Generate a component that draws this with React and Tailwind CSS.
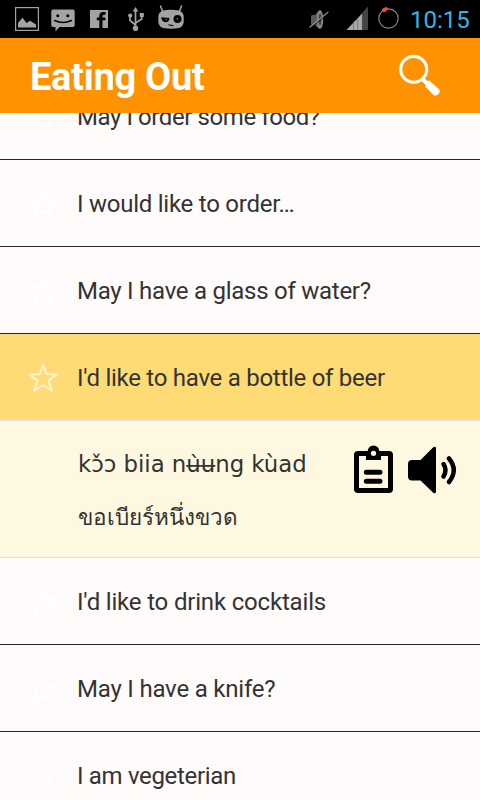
const phrasesAbove = [
  { text: "May I order some food?", tracking: "tracking-[-0.42px]" },
  { text: "I would like to order…", tracking: "tracking-[-0.25px]" },
  { text: "May I have a glass of water?", tracking: "tracking-[-0.26px]" },
];

const phrasesBelow = [
  { text: "I'd like to drink cocktails", tracking: "tracking-[-0.18px]" },
  { text: "May I have a knife?", tracking: "tracking-[-0.2px]" },
  { text: "I am vegeterian", tracking: "tracking-[-0.33px]" },
];

const StatusBar = () => {
  return (
    <div className="flex h-[38px] shrink-0 items-start bg-black text-[#a3a3a3]">
      <svg className="mt-[7px] ml-[15px] size-6" viewBox="0 0 24 24">
        <rect x="0.6" y="0.6" width="22.8" height="22.8" fill="none" stroke="currentColor" strokeWidth="1.2" />
        <path d="M3 20.5v-4.500L7.500 10.700L11.500 16L15 13.800L21 17.500V20.500Z" fill="currentColor" />
      </svg>
      <svg className="mt-[9px] ml-3 h-[23px] w-6" viewBox="0 0 24 23">
        <path d="M2 0.500H22Q23.700 0.500 23.700 2.200V16.300Q23.700 18 22 18H8.500L4.500 22.500V18H2Q0.300 18 0.300 16.300V2.200Q0.300 0.500 2 0.500Z" fill="currentColor" />
        <circle cx="6.800" cy="6.800" r="1.500" fill="#000" />
        <circle cx="16.800" cy="6.800" r="1.500" fill="#000" />
        <path d="M3.700 11.500Q12 15.500 20.300 11.500" fill="none" stroke="#000" strokeWidth="1.600" strokeLinecap="round" />
      </svg>
      <svg className="mt-[10px] ml-[15px] size-[18px]" viewBox="0 0 18 18">
        <rect width="18" height="18" fill="currentColor" />
        <path d="M9.300 18V10.300H6.800V7.500H9.300V6Q9.300 2 13 2H15.500V4.800H14Q12.500 4.800 12.500 6.300V7.500H15.500V10.300H12.500V18Z" fill="#000" />
      </svg>
      <svg className="mt-[7px] ml-5 h-6 w-4" viewBox="0 0 16 24">
        <g fill="none" stroke="currentColor" strokeWidth="1.700">
          <path d="M7.500 3V20M7.500 18L2 13.500V9M7.500 16L13.700 12V8" />
        </g>
        <path d="M7.500 0L10.300 4.500H4.700Z" fill="currentColor" />
        <circle cx="2.200" cy="8.500" r="2.100" fill="currentColor" />
        <rect x="11.800" y="6" width="4" height="4" fill="currentColor" />
        <circle cx="7.500" cy="21.200" r="2.700" fill="currentColor" />
      </svg>
      <svg className="mt-[5px] ml-[14px] h-6 w-[26px]" viewBox="0 0 26 24">
        <path d="M2.500 1L5 7.500M23.500 1L21 7.500" fill="none" stroke="currentColor" strokeWidth="1.500" strokeLinecap="round" />
        <path d="M5 5.500Q13 4 21 5.500Q25.700 7 25.700 12V17Q25 22 21 23Q13 24.500 5 23Q1 22 0.300 17V12Q0.300 7 5 5.500Z" fill="currentColor" />
        <path d="M3.200 12.300L11.500 13Q11 17.300 7.500 17.300Q3.700 17 3.200 12.300Z" fill="#000" />
        <circle cx="19.500" cy="14" r="4" fill="#000" />
        <circle cx="8.200" cy="14.500" r="0.700" fill="currentColor" />
        <circle cx="19.300" cy="14" r="0.700" fill="currentColor" />
        <path d="M10.500 19.800L15.500 20.800" stroke="#000" strokeWidth="1.100" />
      </svg>

      <svg className="mt-[9px] ml-[125px] h-[22px] w-5" viewBox="0 0 20 22">
        <path d="M2 7.500Q2 6 3.500 6H6L10 1.500V20L6 16H3.500Q2 16 2 14.500Z" fill="#5a5a5a" />
        <ellipse cx="11" cy="10.500" rx="3.200" ry="9.500" fill="#858585" />
        <ellipse cx="11" cy="10.500" rx="1.300" ry="6" fill="#3c3c3c" />
        <path d="M0.500 19.700L19 4.500" stroke="#000" strokeWidth="1" />
        <path d="M0.500 18.500L19.300 3" stroke="#8a8a8a" strokeWidth="1.400" />
      </svg>
      <svg className="mt-[6px] ml-[17px] h-6 w-[22px]" viewBox="0 0 22 24">
        <path d="M0.500 24L16.500 7V24Z" fill="#a8a8a8" />
        <path d="M16.500 6.500L22 0.500V24H16.500Z" fill="#444" />
        <path d="M7.500 16V24M11.700 12V24" stroke="#777" strokeWidth="0.900" />
      </svg>
      <svg className="mt-[7px] ml-[10px] size-[22px]" viewBox="0 0 22 22">
        <circle cx="10.500" cy="11.500" r="9.700" fill="none" stroke="#858585" strokeWidth="1.200" />
        <path d="M6 3Q7 2.200 8 2" fill="none" stroke="#ff4444" strokeWidth="3.800" strokeLinecap="round" />
      </svg>
      <span className="mt-[5px] ml-[10px] text-[24px] leading-[30px] whitespace-nowrap text-[#33b5e5]">10:15</span>
    </div>
  );
};

const Header = () => {
  return (
    <header className="flex h-[75px] shrink-0 items-start justify-between bg-[#ff9200] pr-[39px] pl-[30px]">
      <h1 className="mt-[15px] text-[38px] leading-[48px] font-bold tracking-[-0.3px] whitespace-nowrap text-white">
        Eating Out
      </h1>
      <button className="mt-4">
        <svg className="h-[43px] w-[42px]" viewBox="0 0 42 43" fill="none">
          <circle cx="14.700" cy="15.300" r="13" stroke="#fff" strokeWidth="3.200" />
          <path d="M23.500 25L28 29.500" stroke="#fff" strokeWidth="4" />
          <path d="M26.500 29L30 26.300L40 35.300Q41.700 37.500 39.500 40Q37 42.500 34.500 41L26.500 33Z" fill="#fff" />
        </svg>
      </button>
    </header>
  );
};

const Star = ({ className }) => {
  return (
    <svg className={className} viewBox="0 0 30 30" fill="none">
      <path
        d="M15 1.500L18.400 11.100L28.700 11.400L20.500 17.600L23.900 27.700L15 22L6.100 27.700L9.500 17.600L1.300 11.400L11.600 11.100Z"
        stroke="currentColor"
        strokeWidth="2"
        strokeLinejoin="round"
      />
    </svg>
  );
};

const Phrase = ({ text, tracking }) => {
  return (
    <li className="flex h-[87px] items-center border-b border-[#262626] bg-[#fffbfa] pl-7">
      <Star className="mt-px size-[30px] text-white" />
      <span className={`ml-[19px] pt-[2px] ${tracking}`}>{text}</span>
    </li>
  );
};

const SelectedPhrase = () => {
  return (
    <li>
      <div className="flex h-[87px] items-center border-b border-[#dddddd] bg-[#fedb74] pl-7">
        <Star className="mt-px size-[30px] text-[#fff4d0]" />
        <span className="ml-[19px] pt-[2px] tracking-[-0.27px]">I'd like to have a bottle of beer</span>
      </div>
      <div className="flex h-[137px] items-start border-b border-[#dddddd] bg-[#fff8e1] pl-[78px]">
        <div className="w-[275px] whitespace-nowrap">
          <p className="mt-[27px] font-['DejaVu_Sans',sans-serif] text-[22.8px] leading-8">kɔ̌ɔ biia nʉ̀ʉng kùad</p>
          <p className="mt-[19px] text-[22.500px] leading-9">ขอเบียร์หนึ่งขวด</p>
        </div>
        <button className="mt-6">
          <svg className="h-[49px] w-[41px]" viewBox="0 0 41 49" fill="none">
            <rect x="3.500" y="8.500" width="34" height="37" rx="1.500" stroke="#000" strokeWidth="5" strokeLinejoin="round" />
            <path
              d="M13 15V9.500Q13 7.500 14.500 7Q15 0.500 20.500 0.500Q26 0.500 26.500 7Q28 7.500 28 9.500V15Z"
              fill="#000"
            />
            <circle cx="20.500" cy="8.300" r="2.600" fill="#fff8e1" />
            <path d="M13.300 27.300H27M13.300 36.300H27" stroke="#000" strokeWidth="5" strokeLinecap="round" />
          </svg>
        </button>
        <button className="mt-6 ml-[14px]">
          <svg className="h-[49px] w-[49px]" viewBox="0 0 49 49" fill="none">
            <path d="M4 15H12.500L25.500 2Q28 1 28 3V46.500Q28 49 25.500 48L12.500 35.500H4Q0 35.500 0 31.500V19Q0 15 4 15Z" fill="#000" />
            <path d="M35.500 19Q39.500 25 35.500 31.500" stroke="#000" strokeWidth="4.500" strokeLinecap="round" />
            <path d="M41 13.500Q50.500 25 41 37" stroke="#000" strokeWidth="4.500" strokeLinecap="round" />
          </svg>
        </button>
      </div>
    </li>
  );
};

const App = () => {
  return (
    <div className="flex h-[800px] w-[480px] flex-col overflow-hidden bg-[#fffbfa] font-['Roboto',sans-serif]">
      <StatusBar />
      <Header />
      <main className="min-h-0 flex-1 overflow-hidden">
        <ul className="-mt-10 text-[24px] leading-8 whitespace-nowrap text-[#333333]">
          {phrasesAbove.map((phrase) => (
            <Phrase key={phrase.text} {...phrase} />
          ))}
          <SelectedPhrase />
          {phrasesBelow.map((phrase) => (
            <Phrase key={phrase.text} {...phrase} />
          ))}
        </ul>
      </main>
    </div>
  );
};

export default App;
